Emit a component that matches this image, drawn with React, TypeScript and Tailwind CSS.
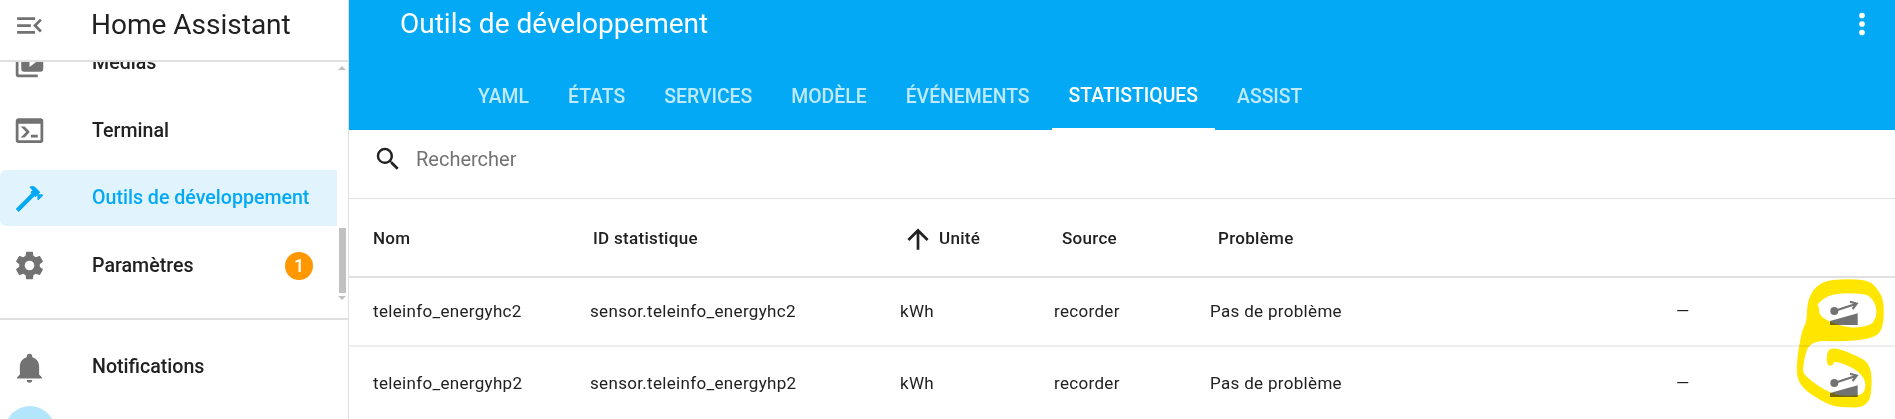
const mdi = {
  menuOpen: "M21,15.61L19.59,17L14.58,12L19.59,7L21,8.39L17.44,12L21,15.61M3,6H16V8H3V6M3,13V11H13V13H3M3,18V16H16V18H3Z",
  media: "M4,6H2V20A2,2 0 0,0 4,22H18V20H4V6M20,2H8A2,2 0 0,0 6,4V16A2,2 0 0,0 8,18H20A2,2 0 0,0 22,16V4A2,2 0 0,0 20,2M12,14.5V5.5L18,10L12,14.5Z",
  console: "M20,19V7H4V19H20M20,3A2,2 0 0,1 22,5V19A2,2 0 0,1 20,21H4A2,2 0 0,1 2,19V5C2,3.89 2.9,3 4,3H20M13,17V15H18V17H13M9.58,13L5.57,9H8.4L11.7,12.3C12.09,12.69 12.09,13.33 11.7,13.72L8.42,17H5.59L9.58,13Z",
  hammer: "M2 19.63L13.43 8.2L12.72 7.5L14.14 6.07L12 3.89C13.2 2.7 15.09 2.7 16.27 3.89L19.87 7.5L18.45 8.91H21.29L22 9.62L18.45 13.21L17.74 12.5V9.62L16.27 11.04L15.56 10.33L4.13 21.76L2 19.63Z",
  cog: "M12,15.5A3.5,3.5 0 0,1 8.5,12A3.5,3.5 0 0,1 12,8.5A3.5,3.5 0 0,1 15.5,12A3.5,3.5 0 0,1 12,15.5M19.43,12.97C19.47,12.65 19.5,12.33 19.5,12C19.5,11.67 19.47,11.34 19.43,11L21.54,9.37C21.73,9.22 21.78,8.95 21.66,8.73L19.66,5.27C19.54,5.05 19.27,4.96 19.05,5.05L16.56,6.05C16.04,5.66 15.5,5.32 14.87,5.07L14.5,2.42C14.46,2.18 14.25,2 14,2H10C9.75,2 9.54,2.18 9.5,2.42L9.13,5.07C8.5,5.32 7.96,5.66 7.44,6.05L4.95,5.05C4.73,4.96 4.46,5.05 4.34,5.27L2.34,8.73C2.21,8.95 2.27,9.22 2.46,9.37L4.57,11C4.53,11.34 4.5,11.67 4.5,12C4.5,12.33 4.53,12.65 4.57,12.97L2.46,14.63C2.27,14.78 2.21,15.05 2.34,15.27L4.34,18.73C4.46,18.95 4.73,19.03 4.95,18.95L7.44,17.94C7.96,18.34 8.5,18.68 9.13,18.93L9.5,21.58C9.54,21.82 9.75,22 10,22H14C14.25,22 14.46,21.82 14.5,21.58L14.87,18.93C15.5,18.67 16.04,18.34 16.56,17.94L19.05,18.95C19.27,19.03 19.54,18.95 19.66,18.73L21.66,15.27C21.78,15.05 21.73,14.78 21.54,14.63L19.43,12.97Z",
  bell: "M21,19V20H3V19L5,17V11C5,7.9 7.03,5.35 10,4.5V4A2,2 0 0,1 12,2A2,2 0 0,1 14,4V4.5C16.97,5.35 19,7.9 19,11V17L21,19M14,21A2,2 0 0,1 12,23A2,2 0 0,1 10,21",
  magnify: "M9.5,3A6.5,6.5 0 0,1 16,9.5C16,11.11 15.41,12.59 14.44,13.73L14.71,14H15.5L20.5,19L19,20.5L14,15.5V14.71L13.73,14.44C12.59,15.41 11.11,16 9.5,16A6.5,6.5 0 0,1 3,9.5A6.5,6.5 0 0,1 9.5,3M9.5,5C7,5 5,7 5,9.5C5,12 7,14 9.5,14C12,14 14,12 14,9.5C14,7 12,5 9.5,5Z",
  arrowUp: "M13,20H11V8L5.5,13.5L4.08,12.08L12,4.16L19.92,12.08L18.5,13.5L13,8V20Z",
  dots: "M12,16A2,2 0 0,1 14,18A2,2 0 0,1 12,20A2,2 0 0,1 10,18A2,2 0 0,1 12,16M12,10A2,2 0 0,1 14,12A2,2 0 0,1 12,14A2,2 0 0,1 10,12A2,2 0 0,1 12,10M12,4A2,2 0 0,1 14,6A2,2 0 0,1 12,8A2,2 0 0,1 10,6A2,2 0 0,1 12,4Z",
};

function Icon({ path, className }: { path: string; className: string }) {
  return (
    <svg viewBox="0 0 24 24" fill="currentColor" className={className}>
      <path d={path} />
    </svg>
  );
}

function NavItem({ icon, label, active, badge }: { icon: string; label: string; active?: boolean; badge?: string }) {
  return (
    <div
      className={
        active
          ? "flex h-[56px] w-[337px] flex-none items-center rounded-l-[6px] bg-[#e1f4fd] pl-[13px] text-[#03a9f4]"
          : "flex h-[56px] w-[337px] flex-none items-center pl-[13px] text-[#212121]"
      }
    >
      <Icon path={icon} className={active ? "h-[33px] w-[33px] flex-none text-[#03a9f4]" : "h-[33px] w-[33px] flex-none text-[#727272]"} />
      <span className="ml-[46px] text-[19.6px] font-medium">{label}</span>
      {badge && (
        <span className="ml-auto mr-[24px] flex h-[28px] w-[28px] items-center justify-center rounded-full bg-[#ff9800] text-[18px] font-medium text-white">
          {badge}
        </span>
      )}
    </div>
  );
}

function Sidebar() {
  return (
    <aside className="flex h-full w-[349px] flex-none flex-col overflow-hidden border-r border-[#e0e0e0] bg-white">
      <div className="flex h-[62px] flex-none items-center border-b-2 border-[#e0e0e0] pb-[10px] pl-[13px]">
        <Icon path={mdi.menuOpen} className="h-[33px] w-[33px] flex-none text-[#727272]" />
        <span className="ml-[45px] text-[28px] text-[#212121]">Home Assistant</span>
      </div>
      <div className="relative flex h-[256px] flex-none flex-col gap-[11.5px] overflow-hidden">
        <div className="-mt-[38.5px]" />
        <NavItem icon={mdi.media} label="Médias" />
        <NavItem icon={mdi.console} label="Terminal" />
        <NavItem icon={mdi.hammer} label="Outils de développement" active />
        <NavItem icon={mdi.cog} label="Paramètres" badge="1" />
        <div className="absolute right-[2px] top-[4px] h-0 w-0 border-x-[4px] border-b-[4px] border-x-transparent border-b-[#c1c1c1]" />
        <div className="absolute right-[2px] top-[166px] h-[65px] w-[7px] bg-[#c1c1c1]" />
        <div className="absolute right-[2px] top-[234px] h-0 w-0 border-x-[4px] border-t-[4px] border-x-transparent border-t-[#c1c1c1]" />
      </div>
      <div className="h-[2px] flex-none bg-[#e0e0e0]" />
      <div className="mt-[19px]">
        <NavItem icon={mdi.bell} label="Notifications" />
      </div>
      <div className="ml-[5px] mt-[11px] h-[50px] w-[50px] flex-none rounded-full bg-[#b3e5fc]" />
    </aside>
  );
}

const tabs = ["YAML", "États", "Services", "Modèle", "Événements", "Statistiques", "Assist"];

function TopBar() {
  return (
    <header className="flex h-[130px] flex-none flex-col bg-[#03a9f4] text-white">
      <div className="flex h-[46px] flex-none items-center justify-between pl-[51px] pr-[16px] pt-[2px]">
        <span className="text-[28px]">Outils de développement</span>
        <Icon path={mdi.dots} className="h-[34px] w-[34px]" />
      </div>
      <nav className="mt-auto flex h-[68px] gap-[5px] pl-[112px]">
        {tabs.map((t) => (
          <div
            key={t}
            className={
              t === "Statistiques"
                ? "flex items-center border-b-2 border-white px-[17px] pt-[2px] text-[19.4px] font-medium uppercase text-white"
                : "flex items-center px-[17px] pt-[2px] text-[19.4px] font-medium uppercase text-white/75"
            }
          >
            {t}
          </div>
        ))}
      </nav>
    </header>
  );
}

function AdjustIcon() {
  return (
    <svg viewBox="0 0 30 26" className="h-[26px] w-[30px] fill-[#727272] stroke-[#727272]">
      <circle cx="4.3" cy="12" r="4" stroke="none" />
      <path d="M4.3 12 L26.5 4.7 M20 2.7 L26.7 4.7 L22.5 10" fill="none" strokeWidth="2.2" />
      <path d="M0 22 L27.7 14.3 V26 H0 Z" stroke="none" />
    </svg>
  );
}

const rows = ["teleinfo_energyhc2", "teleinfo_energyhp2"];

function Table() {
  return (
    <div className="flex-1 text-[#212121]">
      <div className="flex h-[69px] items-center border-b border-[#e0e0e0] pb-[10px] pl-[24px]">
        <Icon path={mdi.magnify} className="h-[30px] w-[30px] text-[#212121]" />
        <span className="ml-[13px] text-[20px] text-[#727272]">Rechercher</span>
      </div>
      <div className="flex h-[79px] items-center border-b-2 border-[#e0e0e0] pl-[24px] pt-[2px] text-[17px] font-medium tracking-[0.3px]">
        <div className="w-[220px]">Nom</div>
        <div className="w-[313px]">ID statistique</div>
        <div className="flex w-[156px] items-center">
          <Icon path={mdi.arrowUp} className="-ml-[4px] mr-[5px] h-[32px] w-[32px]" />
          <span>Unité</span>
        </div>
        <div className="w-[156px]">Source</div>
        <div>Problème</div>
      </div>
      {rows.map((r, i) => (
        <div
          key={r}
          className={
            i === 0
              ? "flex h-[69px] items-center border-b-2 border-[#eeeeee] pl-[24px] text-[17px] tracking-[0.32px]"
              : "flex h-[69px] items-center pl-[24px] pt-[4px] text-[17px] tracking-[0.32px]"
          }
        >
          <div className="w-[217px]">{r}</div>
          <div className="w-[310px]">sensor.{r}</div>
          <div className="w-[154px]">kWh</div>
          <div className="w-[156px]">recorder</div>
          <div className="w-[466px]">Pas de problème</div>
          <div className="w-[154px]">—</div>
          <AdjustIcon />
        </div>
      ))}
    </div>
  );
}

// outline of the highlighter mark, in 3x units relative to (1600,260)
const scribbleOuter: [number, number][] = [
  [690, 60], [800, 60], [830, 85], [850, 125], [848, 200], [825, 232], [730, 243], [625, 238], [605, 320], [610, 350],
  [700, 410], [770, 410], [797, 400], [800, 360], [770, 325], [700, 298], [697, 315], [684, 315], [682, 285], [690, 268],
  [715, 268], [770, 290], [805, 310], [815, 360], [805, 440], [720, 440], [680, 430], [595, 375], [592, 300], [610, 205],
  [622, 190], [625, 120], [650, 80],
];
const scribbleInner: [number, number][] = [
  [645, 135], [690, 97], [795, 97], [820, 115], [835, 150], [825, 190], [790, 205], [730, 205], [655, 172], [655, 138],
];

function smooth(pts: [number, number][]) {
  const mid = (a: [number, number], b: [number, number]) => `${(a[0] + b[0]) / 2} ${(a[1] + b[1]) / 2}`;
  let d = `M${mid(pts[pts.length - 1], pts[0])}`;
  pts.forEach((p, i) => {
    d += ` Q${p[0]} ${p[1]} ${mid(p, pts[(i + 1) % pts.length])}`;
  });
  return d + " Z";
}

export default function App() {
  return (
    <div className="relative flex h-[419px] w-[1895px] overflow-hidden bg-white font-['Roboto',sans-serif]">
      <Sidebar />
      <main className="flex min-w-0 flex-1 flex-col">
        <TopBar />
        <Table />
      </main>
      <svg className="pointer-events-none absolute left-0 top-0 mix-blend-multiply" width="1895" height="419">
        <g transform="translate(1600 260) scale(0.3333)">
          <path d={smooth(scribbleOuter) + " " + smooth(scribbleInner)} fill="#ffe600" fillRule="evenodd" stroke="#ffe600" strokeWidth="5" />
        </g>
      </svg>
    </div>
  );
}
